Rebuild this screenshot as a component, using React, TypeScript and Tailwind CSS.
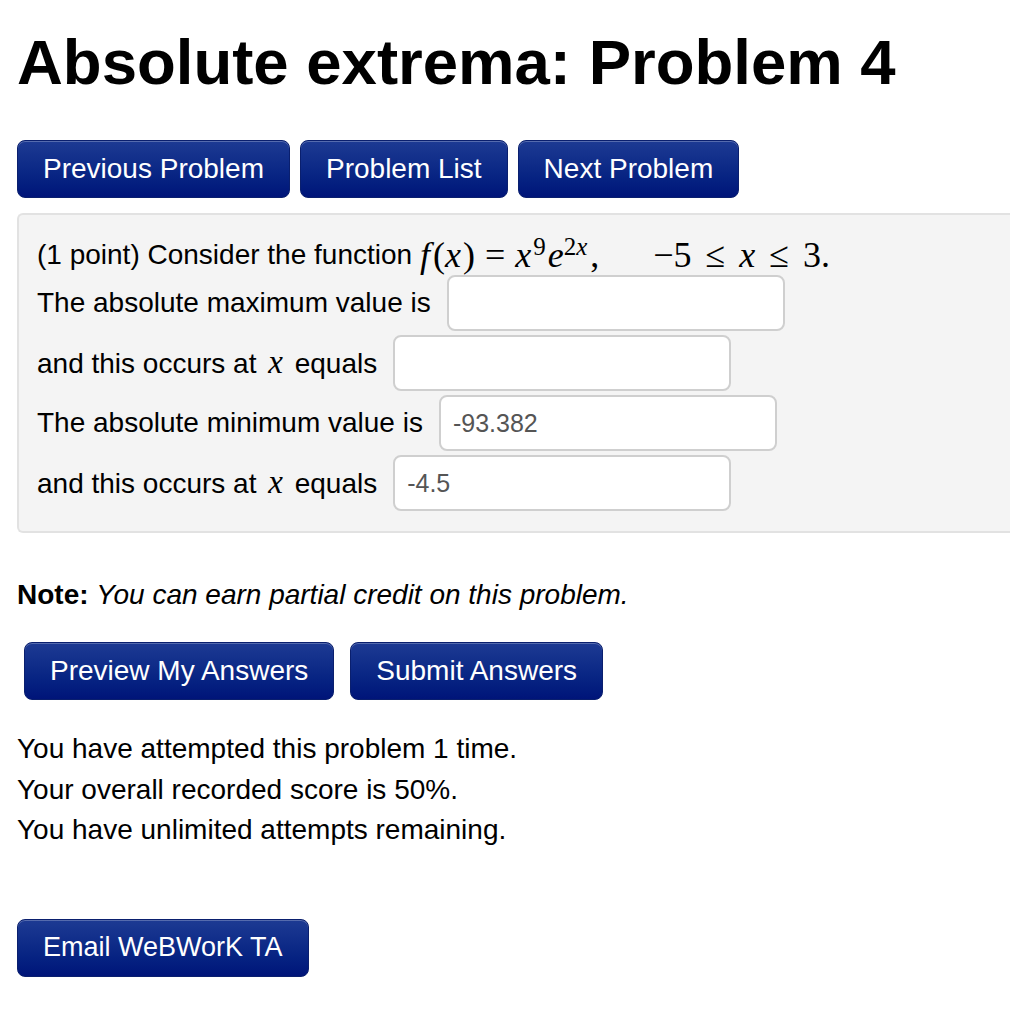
import React from "react";

const btn =
  "h-[58px] px-[25px] rounded-[8px] border border-[#0a1f6e] bg-gradient-to-b from-[#1d3a93] to-[#001479] text-white text-[28px] leading-none shadow-[inset_0_1px_0_rgba(255,255,255,0.25)]";

function Field({ value }: { value?: string }) {
  return (
    <input
      readOnly
      value={value ?? ""}
      className="w-[338px] h-[56px] rounded-[8px] border-2 border-[#cfcfcf] bg-white px-[12px] text-[25px] text-[#555] outline-none"
    />
  );
}

function X() {
  return <i className="font-['Liberation_Serif',serif] text-[33px] mx-[4px]">x</i>;
}

export default function App() {
  return (
    <div className="min-h-screen bg-white text-black font-['Liberation_Sans',Arial,sans-serif] overflow-hidden">
      <div className="pl-[17px] pt-[22px]">
        <h1 className="text-[63.5px] font-bold leading-[80px]">
          Absolute extrema: Problem 4
        </h1>

        <div className="flex gap-[10px] mt-[38px]">
          <button className={btn}>Previous Problem</button>
          <button className={btn}>Problem List</button>
          <button className={btn}>Next Problem</button>
        </div>

        <div className="mt-[15px] border-2 border-r-0 border-[#e2e2e2] rounded-l-[6px] bg-[#f4f4f4] pl-[18px] pt-[20px] pb-[20px] text-[28px]">
          <div className="h-[40px] flex items-center whitespace-nowrap">
            (1 point) Consider the function&nbsp;
            <span className="font-['Liberation_Serif',serif] text-[36px] flex items-baseline">
              <i className="mr-[3px]">f</i>(<i className="mr-[2px]">x</i>)<span className="mx-[10px]">=</span>
              <i>x</i>
              <sup className="text-[25px] ml-[2px]">9</sup>
              <i className="ml-[2px]">e</i>
              <sup className="text-[25px]">
                2<i>x</i>
              </sup>
              <span className="ml-[3px]">,</span>
              <span className="ml-[54px]">−5</span>
              <span className="mx-[14px]">≤</span>
              <i>x</i>
              <span className="mx-[14px]">≤</span>3.
            </span>
          </div>
          <div className="flex flex-col gap-[4px]">
            <div className="flex items-center gap-[16px]">
              <span>The absolute maximum value is</span>
              <Field />
            </div>
            <div className="flex items-center gap-[16px]">
              <span>
                and this occurs at <X /> equals
              </span>
              <Field />
            </div>
            <div className="flex items-center gap-[16px]">
              <span>The absolute minimum value is</span>
              <Field value="-93.382" />
            </div>
            <div className="flex items-center gap-[16px]">
              <span>
                and this occurs at <X /> equals
              </span>
              <Field value="-4.5" />
            </div>
          </div>
        </div>

        <p className="mt-[44px] text-[28px] leading-[36px]">
          <b>Note:</b> <i>You can earn partial credit on this problem.</i>
        </p>

        <div className="flex gap-[16px] mt-[29px] pl-[7px]">
          <button className={btn}>Preview My Answers</button>
          <button className={btn}>Submit Answers</button>
        </div>

        <div className="mt-[29px] text-[28px] leading-[40.5px]">
          <div>You have attempted this problem 1 time.</div>
          <div>Your overall recorded score is 50%.</div>
          <div>You have unlimited attempts remaining.</div>
        </div>

        <div className="mt-[68px]">
          <button className="h-[58px] px-[25px] rounded-[8px] border border-[#0a1f6e] bg-gradient-to-b from-[#1d3a93] to-[#001479] text-white text-[27px] leading-none shadow-[inset_0_1px_0_rgba(255,255,255,0.25)]">
            Email WeBWorK TA
          </button>
        </div>
      </div>
    </div>
  );
}
